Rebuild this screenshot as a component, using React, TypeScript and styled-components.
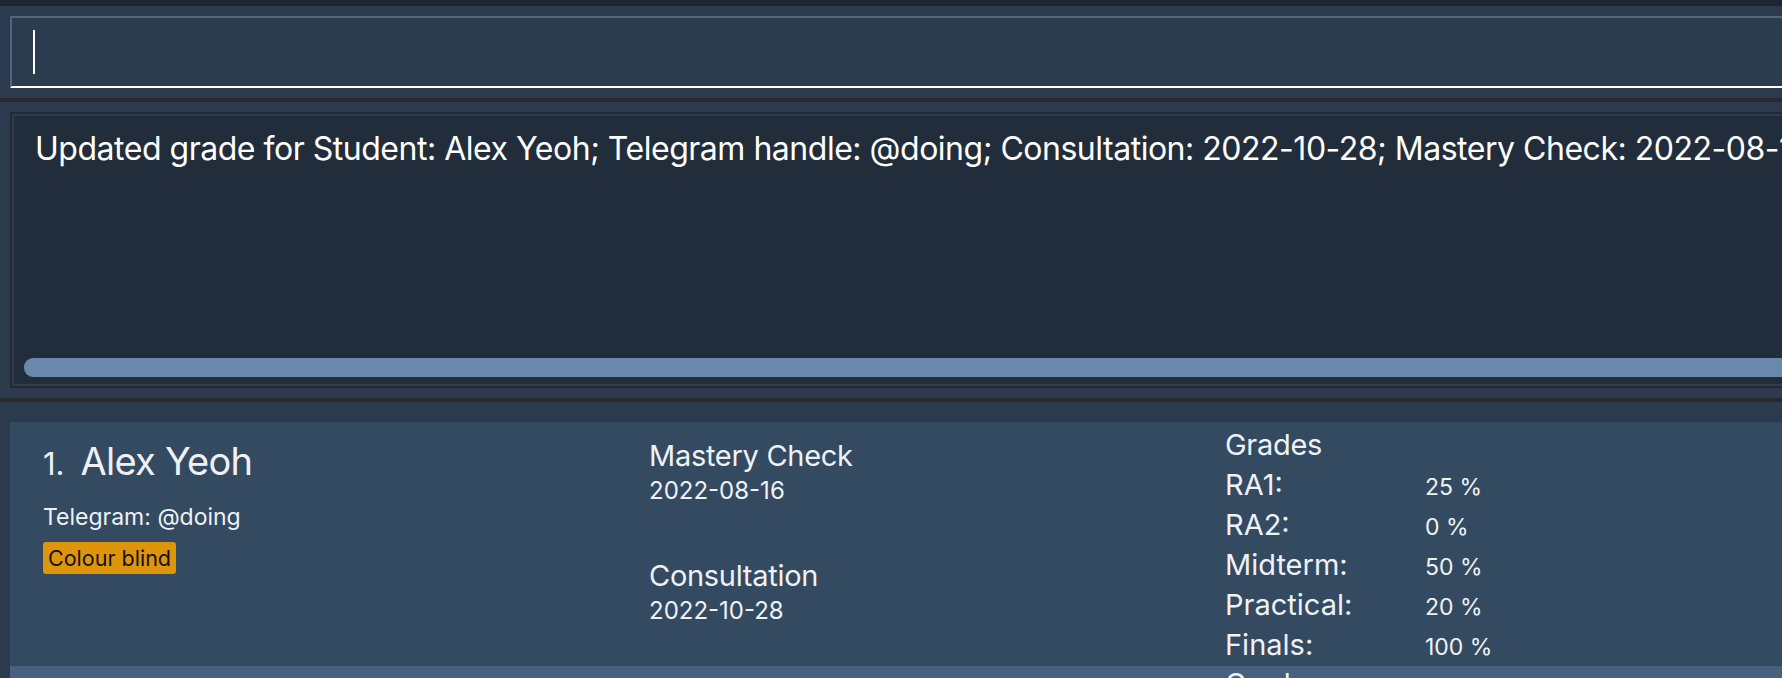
import React from "react";
import styled, { createGlobalStyle } from "styled-components";

const GlobalStyle = createGlobalStyle`
  html, body {
    margin: 0;
    padding: 0;
    background: #2b3b4d;
    overflow: hidden;
  }
  body {
    font-family: Inter, "Noto Sans", sans-serif;
    -webkit-font-smoothing: antialiased;
  }
  #root {
    width: 1782px;
    height: 678px;
    overflow: hidden;
  }
`;

const Window = styled.div`
  display: flex;
  flex-direction: column;
  width: 100%;
  height: 678px;
  background: #2b3b4d;
  overflow: hidden;
`;

const TitleStrip = styled.div`
  flex: none;
  height: 6px;
  background: #1c2531;
`;

const Pane = styled.div<{ $top: number; $bottom: number }>`
  flex: none;
  padding: ${(p) => p.$top}px 0 ${(p) => p.$bottom}px 10px;
  overflow: hidden;
`;

const Divider = styled.div`
  flex: none;
  height: 4px;
  background: #27292c;
`;

const CommandBox = styled.div`
  box-sizing: border-box;
  height: 72px;
  display: flex;
  align-items: flex-start;
  padding: 12px 0 0 21px;
  background: #2b3c4e;
  border-top: 2px solid #51667a;
  border-left: 2px solid #51667a;
  border-bottom: 2px solid #ffffff;
`;

const Caret = styled.span`
  display: block;
  width: 2px;
  height: 44px;
  background: #ffffff;
`;

const ResultFrame = styled.div`
  box-sizing: border-box;
  height: 276px;
  border-top: 2px solid #25292e;
  border-left: 2px solid #25292e;
  border-bottom: 2px solid #25292e;
`;

const ResultInner = styled.div`
  box-sizing: border-box;
  height: 100%;
  display: flex;
  flex-direction: column;
  background: #212d3b;
  border-top: 2px solid #2c3c4e;
  border-left: 2px solid #2c3c4e;
  border-bottom: 2px solid #2c3c4e;
`;

const ResultText = styled.div`
  flex: 1;
  padding: 14px 0 0 21px;
  font-size: 32px;
  letter-spacing: -0.015em;
  line-height: 38px;
  color: #ffffff;
  white-space: nowrap;
  overflow: hidden;
`;

const ScrollThumb = styled.div`
  flex: none;
  height: 19px;
  margin: 0 -40px 7px 10px;
  border-radius: 9px;
  background: #6889ad;
`;

const ListPane = styled.div`
  flex: 1;
  padding: 20px 0 0 10px;
  overflow: hidden;
`;

const Card = styled.div<{ $alt?: boolean }>`
  box-sizing: border-box;
  height: 244px;
  display: grid;
  grid-template-columns: 606px 576px 1fr;
  padding-left: 33px;
  background: ${(p) => (p.$alt ? "#46607d" : "#344a61")};
  color: #eef2f6;
`;

const Column = styled.div<{ $top: number }>`
  display: flex;
  flex-direction: column;
  align-items: flex-start;
  padding-top: ${(p) => p.$top}px;
`;

const NameRow = styled.div`
  display: flex;
  align-items: baseline;
  line-height: 44px;
`;

const Index = styled.span`
  font-size: 31px;
  margin-right: 16px;
`;

const Name = styled.span`
  font-size: 38px;
  letter-spacing: -0.02em;
`;

const Handle = styled.div`
  margin-top: 17px;
  font-size: 23px;
  line-height: 28px;
`;

const Tag = styled.span`
  margin-top: 11px;
  height: 32px;
  padding: 0 5px;
  border-radius: 3px;
  background: #df950a;
  color: #111111;
  font-size: 21.5px;
  line-height: 32px;
`;

const FieldTitle = styled.div<{ $gap?: number }>`
  margin-top: ${(p) => p.$gap ?? 0}px;
  font-size: 29px;
  letter-spacing: -0.01em;
  line-height: 35px;
`;

const FieldValue = styled.div`
  margin-top: 3px;
  font-size: 24px;
  line-height: 29px;
`;

const GradeTable = styled.div`
  display: grid;
  grid-template-columns: 200px auto;
  grid-auto-rows: 40px;
  align-items: baseline;
  margin-top: 3px;
`;

const GradeLabel = styled.span`
  font-size: 29px;
  line-height: 40px;
`;

const GradeValue = styled.span`
  font-size: 23px;
  line-height: 40px;
`;

type Student = {
  index: number;
  name?: string;
  telegram?: string;
  tags: string[];
  mastery?: string;
  consultation?: string;
  grades: [string, string][];
};

const students: Student[] = [
  {
    index: 1,
    name: "Alex Yeoh",
    telegram: "@doing",
    tags: ["Colour blind"],
    mastery: "2022-08-16",
    consultation: "2022-10-28",
    grades: [
      ["RA1:", "25 %"],
      ["RA2:", "0 %"],
      ["Midterm:", "50 %"],
      ["Practical:", "20 %"],
      ["Finals:", "100 %"],
    ],
  },
  {
    index: 2,
    tags: [],
    grades: [],
  },
];

const StudentCard: React.FC<{ s: Student; alt?: boolean }> = ({ s, alt }) => (
  <Card $alt={alt}>
    <Column $top={17}>
      {s.name && (
        <NameRow>
          <Index>{s.index}.</Index>
          <Name>{s.name}</Name>
        </NameRow>
      )}
      {s.telegram && <Handle>Telegram: {s.telegram}</Handle>}
      {s.tags.map((t) => (
        <Tag key={t}>{t}</Tag>
      ))}
    </Column>
    <Column $top={16}>
      {s.mastery && (
        <>
          <FieldTitle>Mastery Check</FieldTitle>
          <FieldValue>{s.mastery}</FieldValue>
        </>
      )}
      {s.consultation && (
        <>
          <FieldTitle $gap={53}>Consultation</FieldTitle>
          <FieldValue>{s.consultation}</FieldValue>
        </>
      )}
    </Column>
    <Column $top={alt ? 0 : 5}>
      <FieldTitle>Grades</FieldTitle>
      {s.grades.length > 0 && (
        <GradeTable>
          {s.grades.map(([k, v]) => (
            <React.Fragment key={k}>
              <GradeLabel>{k}</GradeLabel>
              <GradeValue>{v}</GradeValue>
            </React.Fragment>
          ))}
        </GradeTable>
      )}
    </Column>
  </Card>
);

export default function App() {
  return (
    <>
      <GlobalStyle />
      <Window>
        <TitleStrip />
        <Pane $top={10} $bottom={10}>
          <CommandBox>
            <Caret />
          </CommandBox>
        </Pane>
        <Divider />
        <Pane $top={10} $bottom={10}>
          <ResultFrame>
            <ResultInner>
              <ResultText>
                Updated grade for Student: Alex Yeoh; Telegram handle: @doing; Consultation: 2022-10-28; Mastery Check: 2022-08-16; Grades: RA1: 25 %, RA2: 0 %, Midterm: 50 %, Practical: 20 %, Finals: 100 %
              </ResultText>
              <ScrollThumb />
            </ResultInner>
          </ResultFrame>
        </Pane>
        <Divider />
        <ListPane>
          {students.map((s, i) => (
            <StudentCard key={s.index} s={s} alt={i % 2 === 1} />
          ))}
        </ListPane>
      </Window>
    </>
  );
}
